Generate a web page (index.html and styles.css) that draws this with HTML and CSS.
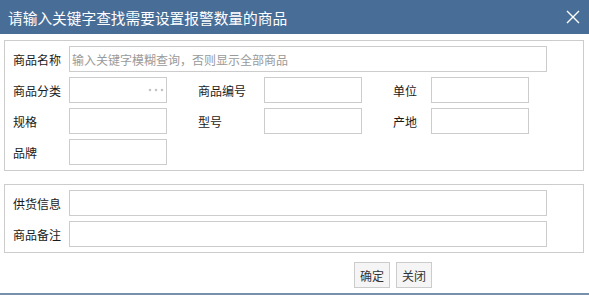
FILE: index.html
```html
<!DOCTYPE html>
<html lang="zh-CN">
<head>
    <meta charset="UTF-8">
    <title>商品查找</title>
    <link rel="stylesheet" href="styles.css">
</head>
<body>
    <div class="dialog">
        <div class="dialog-title">
            <span>请输入关键字查找需要设置报警数量的商品</span>
            <svg class="close-btn" width="14" height="14" viewBox="0 0 14 14">
                <path d="M1 1 L13 13 M13 1 L1 13" stroke="#fff" stroke-width="1.4" fill="none"/>
            </svg>
        </div>
        <div class="dialog-body">
            <fieldset class="box">
                <div class="form-grid">
                    <label class="lbl">商品名称</label>
                    <input class="txt txt-long span-all" type="text" placeholder="输入关键字模糊查询，否则显示全部商品">

                    <label class="lbl">商品分类</label>
                    <div class="combo">
                        <input class="txt" type="text">
                        <svg class="combo-dots" width="16" height="4" viewBox="0 0 16 4">
                            <circle cx="2" cy="2" r="1.3" fill="#c4c4c4"/>
                            <circle cx="8" cy="2" r="1.3" fill="#c4c4c4"/>
                            <circle cx="14" cy="2" r="1.3" fill="#c4c4c4"/>
                        </svg>
                    </div>
                    <label class="lbl">商品编号</label>
                    <input class="txt" type="text">
                    <label class="lbl">单位</label>
                    <input class="txt" type="text">

                    <label class="lbl">规格</label>
                    <input class="txt" type="text">
                    <label class="lbl">型号</label>
                    <input class="txt" type="text">
                    <label class="lbl">产地</label>
                    <input class="txt" type="text">

                    <label class="lbl">品牌</label>
                    <input class="txt" type="text">
                </div>
            </fieldset>

            <fieldset class="box box-second">
                <div class="form-grid">
                    <label class="lbl">供货信息</label>
                    <input class="txt txt-long span-all" type="text">
                    <label class="lbl">商品备注</label>
                    <input class="txt txt-long span-all" type="text">
                </div>
            </fieldset>

            <div class="btn-row">
                <button class="btn">确定</button>
                <button class="btn">关闭</button>
            </div>
        </div>
        <div class="dialog-bottom"></div>
    </div>
</body>
</html>
```

FILE: styles.css
```css
body {
    margin: 0;
    background: #fff;
    font-family: "Noto Sans CJK SC", "Liberation Sans", sans-serif;
    font-size: 12px;
    color: #1a1a1a;
}

.dialog {
    width: 589px;
    height: 295px;
    display: flex;
    flex-direction: column;
    overflow: hidden;
}

.dialog-title {
    height: 34px;
    flex-shrink: 0;
    background-color: #486e98;
    color: #fff;
    font-size: 14.7px;
    display: flex;
    align-items: center;
    justify-content: space-between;
    padding: 0 9px 0 8px;
}

.close-btn {
    display: block;
}

.dialog-body {
    flex: 1;
    padding: 6px 5px 0 4px;
}

.box {
    margin: 0;
    border: 1px solid #ccc;
    padding: 5px 8px;
}

.box-second {
    margin-top: 13px;
}

.form-grid {
    display: grid;
    grid-template-columns: 56px 129px 66px 129px 38px 98px;
    grid-auto-rows: 26px;
    row-gap: 5px;
    align-items: center;
}

.lbl {
    line-height: 26px;
    padding-top: 1px;
    white-space: nowrap;
}

.txt {
    box-sizing: border-box;
    width: 98px;
    height: 26px;
    margin: 0;
    border: 1px solid #ccc;
    padding: 0 2px;
    font-family: inherit;
    font-size: 12px;
    color: #222;
    outline: none;
}

.txt::placeholder {
    color: #9a9a9a;
}

.txt-long {
    width: 478px;
}

.span-all {
    grid-column: 2 / 7;
}

.combo {
    position: relative;
    width: 98px;
    height: 26px;
}

.combo-dots {
    position: absolute;
    right: 3px;
    top: 11px;
}

.btn-row {
    display: flex;
    gap: 6px;
    padding-left: 350px;
    margin-top: 9px;
}

.btn {
    box-sizing: border-box;
    width: 36px;
    height: 26px;
    padding: 0;
    border: 1px solid #ccc;
    background: #f5f5f5;
    font-family: inherit;
    font-size: 12px;
    color: #333;
}

.dialog-bottom {
    height: 2px;
    flex-shrink: 0;
    background: #7890b0;
}
```
